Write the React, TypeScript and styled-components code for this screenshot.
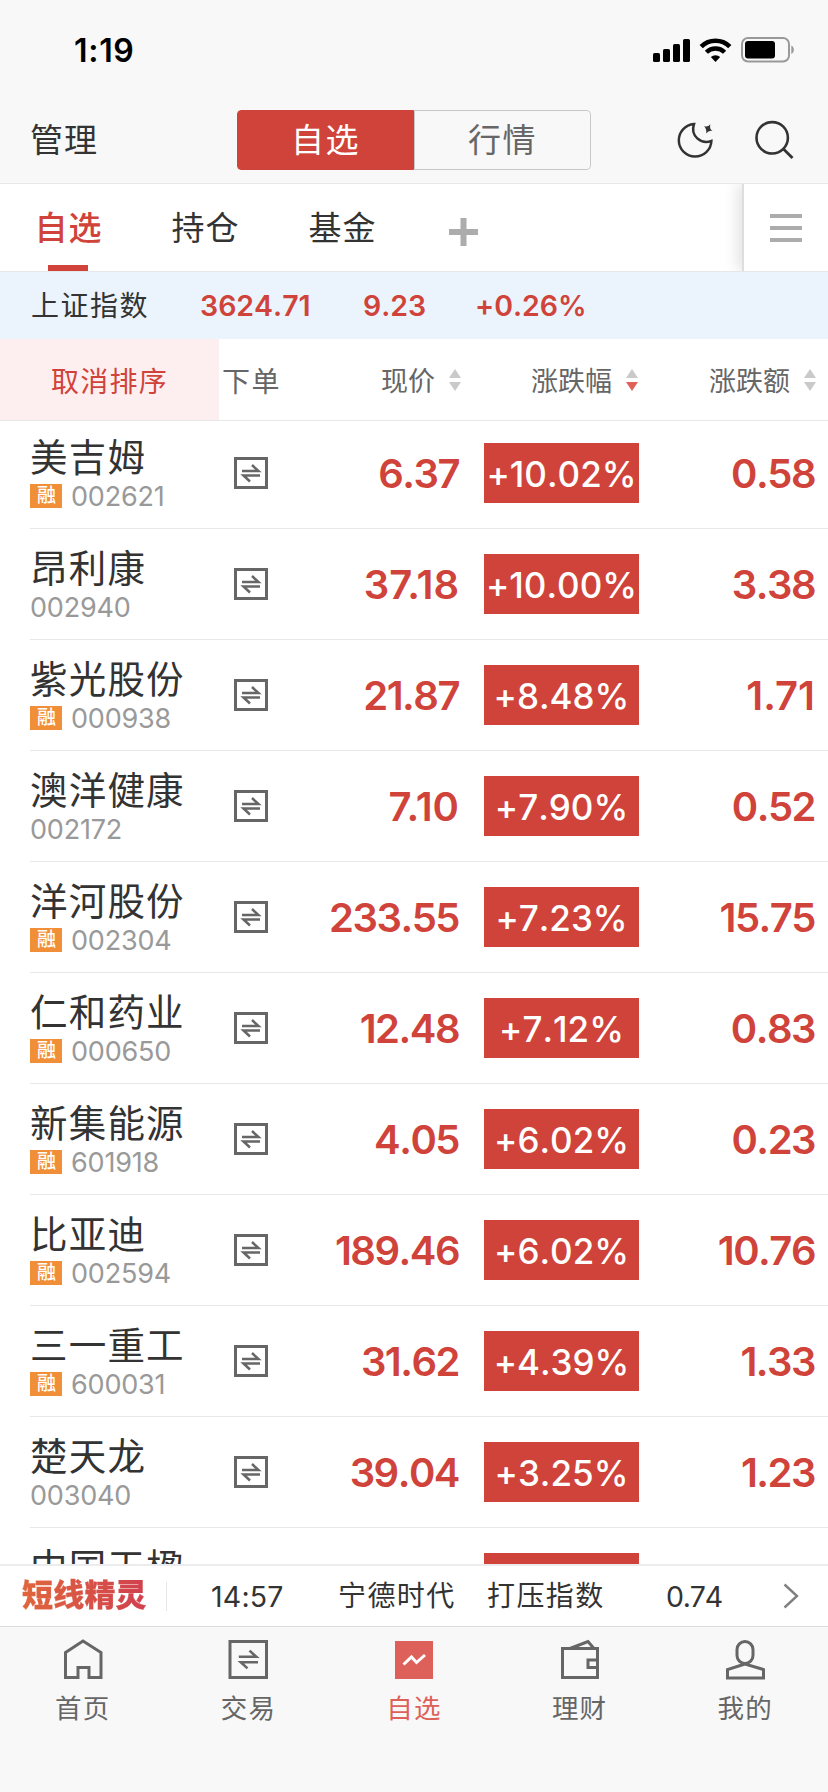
import React from "react";
import styled, { createGlobalStyle } from "styled-components";

const RED = "#d0433a";
const INK = "#333333";
const GREY = "#666666";
const LINE = "#e8e8e8";

const GlobalStyle = createGlobalStyle`
  * { box-sizing: border-box; }
  body {
    margin: 0;
    background: #f8f8f8;
    font-family: Inter, "Noto Sans CJK SC", sans-serif;
    font-kerning: none;
    font-feature-settings: "calt" 0;
    color: ${INK};
  }
  svg { display: block; }
`;

const Screen = styled.div`
  width: 828px;
  height: 1792px;
  overflow: hidden;
  display: flex;
  flex-direction: column;
`;

/* ---------- status bar ---------- */

const StatusBar = styled.header`
  height: 97px;
  flex: none;
  display: flex;
  justify-content: space-between;
  align-items: center;
  padding: 3px 33px 0 74px;
`;

const Clock = styled.span`
  font-size: 32px;
  font-weight: 600;
  letter-spacing: 0.7px;
  line-height: 40px;
  padding-top: 2px;
  color: #000;
`;

const StatusIcons = styled.div`
  display: flex;
  align-items: center;
  gap: 9px;
`;

/* ---------- navigation ---------- */

const NavBar = styled.nav`
  height: 87px;
  flex: none;
  display: grid;
  grid-template-columns: 207px 354px 1fr;
  align-items: center;
  padding: 0 33px 0 30px;
  border-bottom: 1px solid ${LINE};
`;

const NavLink = styled.span`
  font-size: 33px;
  letter-spacing: 1px;
  line-height: 40px;
`;

const Segments = styled.div`
  display: flex;
  height: 60px;
  border-radius: 4px;
  overflow: hidden;
`;

const Segment = styled.button<{ $active?: boolean }>`
  flex: 1;
  padding: 0 0 1px;
  border: 1px solid ${(p) => (p.$active ? RED : "#c8c8c8")};
  border-radius: ${(p) => (p.$active ? "4px 0 0 4px" : "0 4px 4px 0")};
  background: ${(p) => (p.$active ? RED : "transparent")};
  color: ${(p) => (p.$active ? "#fff" : GREY)};
  font: inherit;
  font-size: 33px;
  letter-spacing: 1.5px;
  line-height: 40px;
`;

const NavIcons = styled.div`
  display: flex;
  justify-content: flex-end;
  align-items: center;
  gap: 40px;
`;

/* ---------- group tabs ---------- */

const GroupBar = styled.div`
  height: 88px;
  flex: none;
  display: flex;
  background: #fff;
  border-bottom: 1px solid #e4e8eb;
`;

const Groups = styled.div`
  flex: 1;
  display: flex;
  padding-left: 35px;
  gap: 70px;
`;

const Group = styled.div<{ $active?: boolean }>`
  display: flex;
  flex-direction: column;
  align-items: center;
  justify-content: space-between;
  width: 67px;
  padding-top: 23px;
  font-size: 33px;
  line-height: 42px;
  letter-spacing: 1px;
  white-space: nowrap;
  font-weight: ${(p) => (p.$active ? 500 : 400)};
  color: ${(p) => (p.$active ? RED : INK)};
`;

const Underline = styled.span`
  width: 40px;
  height: 6px;
  margin-right: 1px;
  background: ${RED};
`;

const AddGroup = styled.div`
  padding: 34px 0 0 3px;
`;

const MenuPanel = styled.div`
  width: 86px;
  border-left: 2px solid #dedede;
  box-shadow: -4px 0 14px rgba(0, 0, 0, 0.12);
  clip-path: inset(0 0 0 -24px);
  padding: 30px 0 0 26px;
`;

const MenuLines = styled.div`
  width: 32px;
  height: 28px;
  border-top: 4px solid #acacac;
  border-bottom: 4px solid #acacac;
  display: flex;
  align-items: center;

  &::before {
    content: "";
    width: 32px;
    height: 4px;
    background: #acacac;
  }
`;

/* ---------- index strip ---------- */

const IndexStrip = styled.div`
  height: 67px;
  flex: none;
  display: grid;
  grid-template-columns: 169px 163px 112px auto;
  align-items: center;
  padding: 0 0 1px 31px;
  background: #ebf4fc;
`;

const IndexName = styled.span`
  font-size: 28px;
  letter-spacing: 1.5px;
  line-height: 40px;
  padding-top: 1px;
`;

const IndexValue = styled.span`
  font-size: 28.5px;
  font-weight: 600;
  line-height: 40px;
  padding-top: 2px;
  color: ${RED};
`;

/* ---------- column headings ---------- */

const Headings = styled.div`
  height: 82px;
  flex: none;
  display: grid;
  grid-template-columns: 219px 104px 138px 177px 178px;
  background: #fff;
  border-bottom: 1px solid ${LINE};
`;

const CancelSort = styled.div`
  display: flex;
  align-items: center;
  justify-content: center;
  background: #fdeff0;
  color: ${RED};
  font-size: 28px;
  letter-spacing: 1.2px;
`;

const Heading = styled.div<{ $size?: number }>`
  display: flex;
  align-items: center;
  justify-content: flex-end;
  gap: 14px;
  color: ${GREY};
  font-size: ${(p) => p.$size ?? 27}px;
  white-space: nowrap;

  &:nth-child(2) {
    justify-content: flex-start;
    padding-left: 3px;
    letter-spacing: 1.5px;
  }
`;

/* ---------- stock list ---------- */

const List = styled.main`
  flex: none;
  height: 1143px;
  overflow: hidden;
  background: #fff;
`;

const Rows = styled.div`
  margin-top: -3px;
`;

const Row = styled.div`
  height: 111px;
  margin-left: 30px;
  display: grid;
  grid-template-columns: 204px 34px 191px 25px 155px 176px;
  align-items: center;
  border-bottom: 1px solid ${LINE};
`;

const NameCell = styled.div`
  align-self: start;
  padding-top: 17px;
`;

const StockName = styled.div`
  font-size: 37.5px;
  letter-spacing: 1.2px;
  line-height: 46px;
  white-space: nowrap;
`;

const CodeLine = styled.div`
  display: flex;
  align-items: center;
  gap: 9px;
  height: 24px;
  margin-top: 3px;
`;

const MarginTag = styled.span`
  width: 32px;
  height: 24px;
  line-height: 23px;
  padding-left: 1px;
  text-align: center;
  background: #f18e38;
  color: #fff;
  font-size: 19px;
  font-weight: 500;
`;

const Code = styled.span`
  font-size: 27px;
  line-height: 28px;
  padding-top: 2px;
  letter-spacing: -0.2px;
  color: #999;
`;

const Figure = styled.div<{ $kerned: boolean }>`
  text-align: right;
  font-size: 40px;
  font-weight: 600;
  line-height: 48px;
  padding-top: 2px;
  font-kerning: ${(p) => (p.$kerned ? "normal" : "none")};
  letter-spacing: ${(p) => (p.$kerned ? 0 : -1.5)}px;
  color: ${RED};
`;

const ChangeBadge = styled.div`
  grid-column: 5;
  height: 60px;
  line-height: 62px;
  text-align: center;
  background: ${RED};
  color: #fff;
  font-size: 35px;
  font-weight: 500;
  white-space: nowrap;
`;

/* ---------- news ticker ---------- */

const Ticker = styled.div`
  height: 62px;
  flex: none;
  display: grid;
  grid-template-columns: 144px 45px 127px 149px 179px 117px auto;
  align-items: center;
  padding-left: 22px;
  background: #fff;
  border-top: 2px solid #ececec;
  font-size: 28px;
  white-space: nowrap;
`;

const TickerLogo = styled.span`
  font-size: 31px;
  font-weight: 900;
  line-height: 36px;
  padding-bottom: 2px;
  letter-spacing: 0.2px;
  background: linear-gradient(90deg, #e0663c, #d0404f);
  background-clip: text;
  -webkit-background-clip: text;
  -webkit-text-stroke: 0.3px transparent;
  color: transparent;
  justify-self: start;
`;

const TickerDivider = styled.span`
  width: 1px;
  height: 29px;
  background: #e6e6e6;
`;

const TickerText = styled.span`
  letter-spacing: 1.4px;
  line-height: 38px;
`;

const TickerNumber = styled.span<{ $spacing?: number }>`
  font-size: 28.5px;
  line-height: 38px;
  padding-top: 1px;
  letter-spacing: ${(p) => p.$spacing ?? 0}px;
`;

/* ---------- tab bar ---------- */

const TabBar = styled.footer`
  flex: 1;
  display: grid;
  grid-template-columns: repeat(5, 1fr);
  border-top: 1px solid #dcdcdc;
`;

const Tab = styled.div<{ $active?: boolean }>`
  display: flex;
  flex-direction: column;
  align-items: center;
  padding-top: 11px;
  gap: 9px;
  color: ${(p) => (p.$active ? "#de605a" : GREY)};
  font-size: 26.5px;
  letter-spacing: 1.2px;
  line-height: 38px;
`;

const Signal = () => (
  <svg width="37" height="23" viewBox="0 0 37 23">
    <rect x="0" y="14" width="7" height="9" rx="1.6" />
    <rect x="10" y="10" width="7" height="13" rx="1.6" />
    <rect x="20" y="5" width="7" height="18" rx="1.6" />
    <rect x="30" y="0" width="7" height="23" rx="1.6" />
  </svg>
);

const Wifi = () => (
  <svg width="33" height="24" viewBox="0 0 33 24">
    <path d="M2.2 8.6a20.5 20.5 0 0 1 28.6 0" fill="none" stroke="#000" strokeWidth="4.6" />
    <path d="M7.4 14.2a13 13 0 0 1 18.2 0" fill="none" stroke="#000" strokeWidth="4.4" />
    <path d="M11.8 19a7 7 0 0 1 9.4 0L16.5 24z" />
  </svg>
);

const Battery = () => (
  <svg width="54" height="26" viewBox="0 0 54 26">
    <rect x="1" y="1" width="47" height="23.5" rx="6" fill="none" stroke="#999" strokeWidth="2" />
    <rect x="4" y="4" width="30" height="17.5" rx="3" />
    <path d="M50.3 8.5c3.4 1.4 3.4 7 0 8.4z" fill="#999" />
  </svg>
);

const Moon = () => (
  <svg width="38" height="38" viewBox="0 0 38 38">
    <path
      d="M17 3A16.3 16.3 0 1 0 34.4 20C24 23.5 13 15 17 3z"
      fill="none"
      stroke={INK}
      strokeWidth="2.5"
    />
    <path d="M26.800 5Q30.600 6.800 33.400 3.200Q32 7.600 35.500 10Q31.500 9.200 29.200 12.500Q30 8 26.800 5z" fill={INK} />
  </svg>
);

const Search = () => (
  <svg width="40" height="40" viewBox="0 0 40 40">
    <circle cx="17.2" cy="17.8" r="15.7" fill="none" stroke={INK} strokeWidth="2.6" />
    <path d="M28.2 28.8l9.3 9.2" stroke={INK} strokeWidth="2.8" />
  </svg>
);

const Plus = () => (
  <svg width="29" height="28" viewBox="0 0 29 28">
    <path d="M0 14h29M14.5 0v28" stroke="#acacac" strokeWidth="6" />
  </svg>
);

const SortMark = ({ down }: { down?: boolean }) => (
  <svg width="12" height="22" viewBox="0 0 12 22">
    <path d="M0 9L6 0l6 9z" fill="#cacaca" />
    <path d="M0 13l6 9 6-9z" fill={down ? "#e0605a" : "#cacaca"} />
  </svg>
);

const Order = () => (
  <svg width="34" height="32" viewBox="0 0 34 32">
    <rect x="1.5" y="1.5" width="31" height="29" fill="none" stroke={GREY} strokeWidth="3" />
    <path d="M8 14h16.500L18 8M26 18.500H9.500L16 24.500" fill="none" stroke={GREY} strokeWidth="2.5" />
  </svg>
);

const HomeIcon = () => (
  <svg width="40" height="42" viewBox="0 0 40 42">
    <path d="M2.5 14.5L20 3l18 11.500v25H26V29.500H15v10H2.500z" fill="none" stroke={GREY} strokeWidth="3" />
  </svg>
);

const TradeIcon = () => (
  <svg width="40" height="42" viewBox="0 0 40 42">
    <rect x="2" y="3.5" width="36.5" height="36" fill="none" stroke={GREY} strokeWidth="3" />
    <path d="M10.800 18.800h17.500L21.500 12.600M30 24.200H12.800L19.500 30.400" fill="none" stroke={GREY} strokeWidth="2.6" />
  </svg>
);

const WatchIcon = () => (
  <svg width="40" height="42" viewBox="0 0 40 42">
    <rect x="1" y="3" width="38" height="38" fill="#de605a" />
    <path d="M9.500 26.500l8-7.500 5 5.500 8.500-7.500" fill="none" stroke="#fff" strokeWidth="3" />
  </svg>
);

const WalletIcon = () => (
  <svg width="40" height="42" viewBox="0 0 40 42">
    <path d="M2.500 10.500h35v29h-35zM10 10.500L28 3.500l6 7M37.500 22H28v7.500h9.500" fill="none" stroke={GREY} strokeWidth="3" />
  </svg>
);

const ProfileIcon = () => (
  <svg width="40" height="42" viewBox="0 0 40 42">
    <rect x="12" y="3.5" width="16" height="22" rx="8" fill="none" stroke={GREY} strokeWidth="3" />
    <path d="M20 26L2.500 31.500v8.500h36v-8.500z" fill="none" stroke={GREY} strokeWidth="3" />
  </svg>
);

const Chevron = () => (
  <svg width="16" height="26" viewBox="0 0 16 26">
    <path d="M1.5 1.5L14 13 1.5 24.5" fill="none" stroke="#808080" strokeWidth="2.4" />
  </svg>
);

const needsKerning = (value: string) => /7\.?1/.test(value);

const Amount = ({ value }: { value: string }) => <Figure $kerned={needsKerning(value)}>{value}</Figure>;

type Stock = { name: string; code: string; margin?: boolean; price: string; pct: string; diff: string };

const stocks: Stock[] = [
  { name: "美吉姆", code: "002621", margin: true, price: "6.37", pct: "+10.02%", diff: "0.58" },
  { name: "昂利康", code: "002940", price: "37.18", pct: "+10.00%", diff: "3.38" },
  { name: "紫光股份", code: "000938", margin: true, price: "21.87", pct: "+8.48%", diff: "1.71" },
  { name: "澳洋健康", code: "002172", price: "7.10", pct: "+7.90%", diff: "0.52" },
  { name: "洋河股份", code: "002304", margin: true, price: "233.55", pct: "+7.23%", diff: "15.75" },
  { name: "仁和药业", code: "000650", margin: true, price: "12.48", pct: "+7.12%", diff: "0.83" },
  { name: "新集能源", code: "601918", margin: true, price: "4.05", pct: "+6.02%", diff: "0.23" },
  { name: "比亚迪", code: "002594", margin: true, price: "189.46", pct: "+6.02%", diff: "10.76" },
  { name: "三一重工", code: "600031", margin: true, price: "31.62", pct: "+4.39%", diff: "1.33" },
  { name: "楚天龙", code: "003040", price: "39.04", pct: "+3.25%", diff: "1.23" },
];

const tabs = [
  { label: "首页", Icon: HomeIcon },
  { label: "交易", Icon: TradeIcon },
  { label: "自选", Icon: WatchIcon, active: true },
  { label: "理财", Icon: WalletIcon },
  { label: "我的", Icon: ProfileIcon },
];

export default function App() {
  return (
    <Screen>
      <GlobalStyle />
      <StatusBar>
        <Clock>1:19</Clock>
        <StatusIcons>
          <Signal />
          <Wifi />
          <Battery />
        </StatusIcons>
      </StatusBar>
      <NavBar>
        <NavLink>管理</NavLink>
        <Segments>
          <Segment $active>自选</Segment>
          <Segment>行情</Segment>
        </Segments>
        <NavIcons>
          <Moon />
          <Search />
        </NavIcons>
      </NavBar>
      <GroupBar>
        <Groups>
          <Group $active>
            自选
            <Underline />
          </Group>
          <Group>持仓</Group>
          <Group>基金</Group>
          <AddGroup>
            <Plus />
          </AddGroup>
        </Groups>
        <MenuPanel>
          <MenuLines />
        </MenuPanel>
      </GroupBar>
      <IndexStrip>
        <IndexName>上证指数</IndexName>
        <IndexValue>3624.71</IndexValue>
        <IndexValue>9.23</IndexValue>
        <IndexValue>+0.26%</IndexValue>
      </IndexStrip>
      <Headings>
        <CancelSort>取消排序</CancelSort>
        <Heading $size={28}>下单</Heading>
        <Heading>
          现价
          <SortMark />
        </Heading>
        <Heading>
          涨跌幅
          <SortMark down />
        </Heading>
        <Heading>
          涨跌额
          <SortMark />
        </Heading>
      </Headings>
      <List>
        <Rows>
          {stocks.map((s) => (
            <Row key={s.code}>
              <NameCell>
                <StockName>{s.name}</StockName>
                <CodeLine>
                  {s.margin && <MarginTag>融</MarginTag>}
                  <Code>{s.code}</Code>
                </CodeLine>
              </NameCell>
              <Order />
              <Amount value={s.price} />
              <ChangeBadge>{s.pct}</ChangeBadge>
              <Amount value={s.diff} />
            </Row>
          ))}
          <Row>
            <NameCell>
              <StockName>中国天楹</StockName>
            </NameCell>
            <ChangeBadge />
          </Row>
        </Rows>
      </List>
      <Ticker>
        <TickerLogo>短线精灵</TickerLogo>
        <TickerDivider />
        <TickerNumber $spacing={0.2}>14:57</TickerNumber>
        <TickerText>宁德时代</TickerText>
        <TickerText>打压指数</TickerText>
        <TickerNumber $spacing={-1.2}>0.74</TickerNumber>
        <Chevron />
      </Ticker>
      <TabBar>
        {tabs.map(({ label, Icon, active }) => (
          <Tab key={label} $active={active}>
            <Icon />
            {label}
          </Tab>
        ))}
      </TabBar>
    </Screen>
  );
}
